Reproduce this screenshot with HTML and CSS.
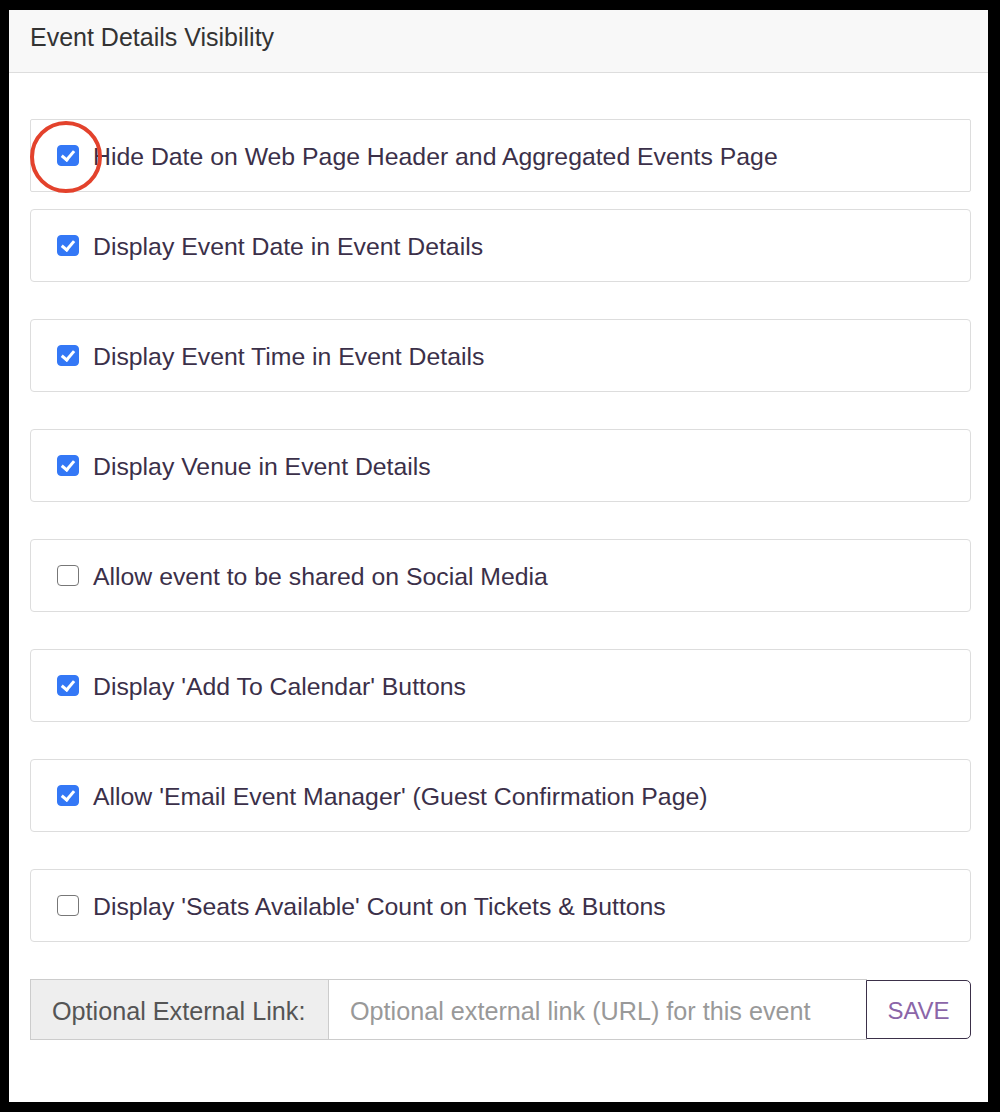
FILE: index.html
```html
<!DOCTYPE html>
<html lang="en">
<head>
    <meta charset="UTF-8">
    <title>Event Details Visibility</title>
    <link rel="stylesheet" href="styles.css">
</head>
<body>
    <div class="frame">
        <div class="panel-heading">Event Details Visibility</div>
        <div class="panel-body">
            <label class="option first">
                <input type="checkbox" checked>
                <span>Hide Date on Web Page Header and Aggregated Events Page</span>
                <!-- annotation circle -->
                <svg class="mark" width="80" height="80" viewBox="0 0 80 80"><circle cx="40" cy="40" r="34" fill="none" stroke="#e3422c" stroke-width="4"/></svg>
            </label>
            <label class="option">
                <input type="checkbox" checked>
                <span>Display Event Date in Event Details</span>
            </label>
            <label class="option">
                <input type="checkbox" checked>
                <span>Display Event Time in Event Details</span>
            </label>
            <label class="option">
                <input type="checkbox" checked>
                <span>Display Venue in Event Details</span>
            </label>
            <label class="option">
                <input type="checkbox">
                <span>Allow event to be shared on Social Media</span>
            </label>
            <label class="option">
                <input type="checkbox" checked>
                <span>Display 'Add To Calendar' Buttons</span>
            </label>
            <label class="option">
                <input type="checkbox" checked>
                <span>Allow 'Email Event Manager' (Guest Confirmation Page)</span>
            </label>
            <label class="option">
                <input type="checkbox">
                <span>Display 'Seats Available' Count on Tickets &amp; Buttons</span>
            </label>

            <div class="link-group">
                <span class="addon">Optional External Link:</span>
                <input type="text" placeholder="Optional external link (URL) for this event">
                <button type="button">SAVE</button>
            </div>
        </div>
    </div>
</body>
</html>
```

FILE: styles.css
```css
:root {
    --text: #3b3049;
    --border: #dddddd;
    --blue: #3478f6;
}
html, body {
    margin: 0;
    padding: 0;
    background: #fff;
    font-family: 'Liberation Sans', Arial, sans-serif;
}
.frame {
    width: 979px;
    height: 1092px;
    border-style: solid;
    border-color: #000;
    border-width: 10px 12px 10px 9px;
    background: #fff;
}
.panel-heading {
    height: 63px;
    box-sizing: border-box;
    padding: 0 21px 8px;
    display: flex;
    align-items: center;
    background: #f8f8f8;
    border-bottom: 1px solid var(--border);
    color: #333;
    font-size: 25px;
}
.panel-body {
    padding: 46px 17px 0 21px;
}
.option {
    position: relative;
    display: flex;
    align-items: center;
    gap: 14px;
    height: 73px;
    box-sizing: border-box;
    padding: 0 26px;
    margin-bottom: 37px;
    border: 1px solid var(--border);
    border-radius: 4px;
    color: var(--text);
    font-size: 24.8px;
}
.option span {
    padding-top: 3px;
}
.option.first {
    margin-bottom: 17px;
    border-radius: 2px;
}
.option input {
    appearance: none;
    -webkit-appearance: none;
    width: 22px;
    height: 21px;
    margin: 0;
    flex: none;
    border: 1.5px solid #777;
    border-radius: 4px;
    background: #fff;
    position: relative;
    box-sizing: border-box;
}
.option input:checked {
    background: var(--blue);
    border-color: var(--blue);
}
.option input:checked::after {
    content: "";
    position: absolute;
    left: 6px;
    top: 2px;
    width: 5px;
    height: 10px;
    border: solid #fff;
    border-width: 0 3px 3px 0;
    transform: rotate(40deg);
}
.mark {
    position: absolute;
    left: -5px;
    top: -3px;
}
.link-group {
    display: flex;
    height: 61px;
    font-size: 25.2px;
}
.addon {
    display: flex;
    align-items: center;
    width: 298px;
    box-sizing: border-box;
    padding: 3px 0 0 21px;
    background: #eee;
    border: 1px solid #ccc;
    border-right: none;
    color: #555;
}
.link-group input {
    flex: 1;
    min-width: 0;
    box-sizing: border-box;
    padding: 3px 21px 0;
    border: 1px solid #ccc;
    font: inherit;
    color: #555;
}
.link-group input::placeholder {
    color: #999;
}
.link-group button {
    width: 105px;
    margin: 1px 0 0 -1px;
    height: 59px;
    padding-top: 3px;
    background: #fff;
    border: 1px solid var(--text);
    border-radius: 0 5px 5px 0;
    color: #8b65a8;
    font: inherit;
    font-size: 24px;
}
```
